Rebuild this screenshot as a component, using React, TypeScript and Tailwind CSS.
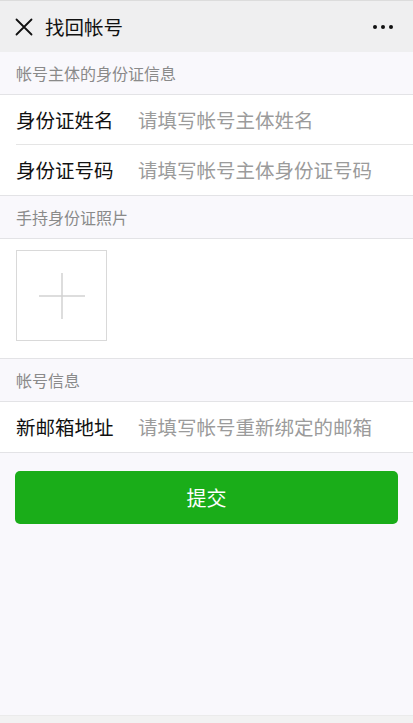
import { useState } from 'react'

const FONT = { fontFamily: '"Noto Sans CJK SC", "Noto Sans", sans-serif' }

function SectionTitle({ children }: { children: string }) {
  return (
    <div className="h-[43px] flex items-center px-4 text-[16px] text-[#8a8a8a] border-b border-[#e3e3e6]">
      {children}
    </div>
  )
}

function FieldRow({ label, placeholder, last }: { label: string; placeholder: string; last?: boolean }) {
  const [value, setValue] = useState('')
  return (
    <div className="pl-4 bg-white">
      <div className={`h-[50px] flex items-center ${last ? '' : 'border-b border-[#e5e5e5]'}`}>
        <label className="w-[122px] shrink-0 text-[19.5px] text-[#111]">{label}</label>
        <input
          value={value}
          onChange={(e) => setValue(e.target.value)}
          placeholder={placeholder}
          className="flex-1 min-w-0 bg-transparent outline-none text-[19.5px] text-[#111] placeholder:text-[#9b9b9b]"
          style={FONT}
        />
      </div>
    </div>
  )
}

export default function App() {
  return (
    <div className="w-[413px] h-[723px] flex flex-col bg-[#f9f8fc] overflow-hidden" style={FONT}>
      {/* nav bar */}
      <div className="h-[52px] shrink-0 flex items-center bg-[#efeff0] border-t border-[#dcdcdc]">
        <button className="w-[44px] h-full flex items-center justify-center pl-1">
          <svg width="18" height="18" viewBox="0 0 18 18" stroke="#111" strokeWidth="1.8" strokeLinecap="round">
            <path d="M1.5 1.5 L16.5 16.5 M16.5 1.5 L1.5 16.5" />
          </svg>
        </button>
        <div className="ml-[1px] text-[19.5px] text-[#111]">找回帐号</div>
        <div className="ml-auto mr-[20px] flex gap-[4px]">
          <span className="w-[4px] h-[4px] rounded-full bg-[#111]" />
          <span className="w-[4px] h-[4px] rounded-full bg-[#111]" />
          <span className="w-[4px] h-[4px] rounded-full bg-[#111]" />
        </div>
      </div>

      <SectionTitle>帐号主体的身份证信息</SectionTitle>
      <div className="border-b border-[#e3e3e6]">
        <FieldRow label="身份证姓名" placeholder="请填写帐号主体姓名" />
        <FieldRow label="身份证号码" placeholder="请填写帐号主体身份证号码" last />
      </div>

      <SectionTitle>手持身份证照片</SectionTitle>
      <div className="h-[120px] bg-white border-b border-[#e3e3e6] px-4 pt-[11px]">
        <button className="w-[91px] h-[91px] border border-[#d9d9d9] flex items-center justify-center">
          <svg width="46" height="46" viewBox="0 0 46 46" stroke="#d2d2d2" strokeWidth="1.5">
            <path d="M23 0 V46 M0 23 H46" />
          </svg>
        </button>
      </div>

      <SectionTitle>帐号信息</SectionTitle>
      <div className="border-b border-[#e3e3e6]">
        <FieldRow label="新邮箱地址" placeholder="请填写帐号重新绑定的邮箱" last />
      </div>

      <div className="px-[15px] pt-[18px]">
        <button className="w-full h-[53px] rounded-[5px] bg-[#1aad19] text-white text-[20px]">提交</button>
      </div>

      <div className="mt-auto h-[8px] bg-[#f2f2f2] border-t border-[#ebebeb]" />
    </div>
  )
}
